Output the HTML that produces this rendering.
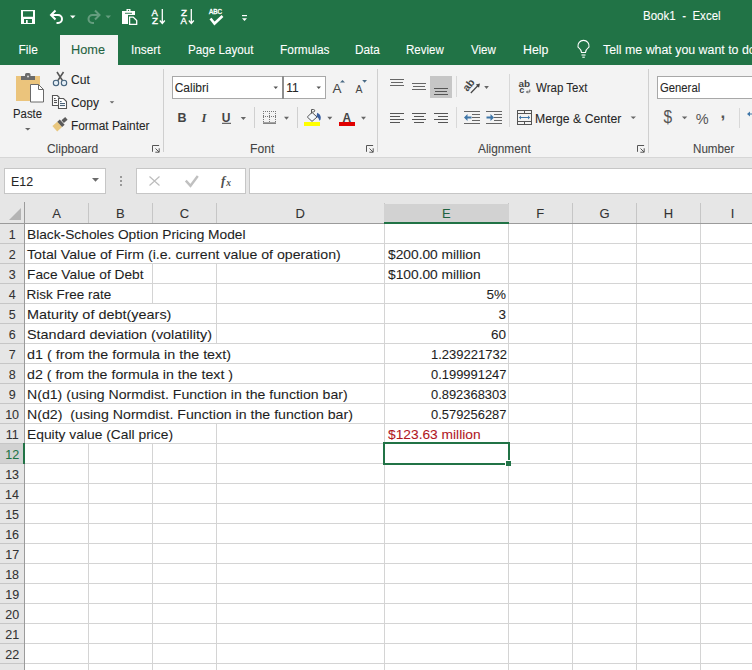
<!DOCTYPE html>
<html><head><meta charset="utf-8"><style>
html,body{margin:0;padding:0;width:752px;height:670px;overflow:hidden;background:#fff}
body{position:relative;font-family:"Liberation Sans",sans-serif}
body>div{position:absolute}
.t{white-space:pre;line-height:normal;-webkit-text-stroke:0.08px currentColor}
</style></head><body>
<div style="left:0px;top:0px;width:752px;height:65px;background:#217346"></div>
<div style="left:60px;top:35px;width:58px;height:30px;background:#f3f3f3"></div>
<div style="left:0px;top:65px;width:752px;height:92px;background:#f3f3f3"></div>
<div style="left:0px;top:157px;width:752px;height:1px;background:#d6d6d6"></div>
<div style="left:0px;top:158px;width:752px;height:66px;background:#e6e6e6"></div>
<div style="left:4px;top:168px;width:102px;height:26px;background:#fff;box-sizing:border-box;border:1px solid #c6c6c6"></div>
<div style="left:136px;top:168px;width:110px;height:26px;background:#fff;box-sizing:border-box;border:1px solid #c6c6c6"></div>
<div style="left:249px;top:168px;width:510px;height:26px;background:#fff;box-sizing:border-box;border:1px solid #c6c6c6"></div>
<div style="left:0px;top:224px;width:24px;height:446px;background:#e6e6e6"></div>
<div style="left:25px;top:224px;width:727px;height:446px;background:#fff"></div>
<div style="left:88px;top:203px;width:1px;height:20px;background:#c6c6c6"></div>
<div style="left:152px;top:203px;width:1px;height:20px;background:#c6c6c6"></div>
<div style="left:216px;top:203px;width:1px;height:20px;background:#c6c6c6"></div>
<div style="left:384px;top:203px;width:1px;height:20px;background:#c6c6c6"></div>
<div style="left:508px;top:203px;width:1px;height:20px;background:#c6c6c6"></div>
<div style="left:572px;top:203px;width:1px;height:20px;background:#c6c6c6"></div>
<div style="left:636px;top:203px;width:1px;height:20px;background:#c6c6c6"></div>
<div style="left:700px;top:203px;width:1px;height:20px;background:#c6c6c6"></div>
<div style="left:24px;top:202px;width:1px;height:468px;background:#9b9b9b"></div>
<div style="left:0px;top:223px;width:752px;height:1px;background:#9b9b9b"></div>
<div style="left:384px;top:204px;width:125px;height:18px;background:#d2d2d2"></div>
<div style="left:384px;top:222px;width:125px;height:2px;background:#217346"></div>
<div style="left:0px;top:243px;width:24px;height:1px;background:#c6c6c6"></div>
<div style="left:25px;top:243px;width:727px;height:1px;background:#d4d4d4"></div>
<div style="left:0px;top:263px;width:24px;height:1px;background:#c6c6c6"></div>
<div style="left:25px;top:263px;width:727px;height:1px;background:#d4d4d4"></div>
<div style="left:0px;top:283px;width:24px;height:1px;background:#c6c6c6"></div>
<div style="left:25px;top:283px;width:727px;height:1px;background:#d4d4d4"></div>
<div style="left:0px;top:303px;width:24px;height:1px;background:#c6c6c6"></div>
<div style="left:25px;top:303px;width:727px;height:1px;background:#d4d4d4"></div>
<div style="left:0px;top:323px;width:24px;height:1px;background:#c6c6c6"></div>
<div style="left:25px;top:323px;width:727px;height:1px;background:#d4d4d4"></div>
<div style="left:0px;top:343px;width:24px;height:1px;background:#c6c6c6"></div>
<div style="left:25px;top:343px;width:727px;height:1px;background:#d4d4d4"></div>
<div style="left:0px;top:363px;width:24px;height:1px;background:#c6c6c6"></div>
<div style="left:25px;top:363px;width:727px;height:1px;background:#d4d4d4"></div>
<div style="left:0px;top:383px;width:24px;height:1px;background:#c6c6c6"></div>
<div style="left:25px;top:383px;width:727px;height:1px;background:#d4d4d4"></div>
<div style="left:0px;top:403px;width:24px;height:1px;background:#c6c6c6"></div>
<div style="left:25px;top:403px;width:727px;height:1px;background:#d4d4d4"></div>
<div style="left:0px;top:423px;width:24px;height:1px;background:#c6c6c6"></div>
<div style="left:25px;top:423px;width:727px;height:1px;background:#d4d4d4"></div>
<div style="left:0px;top:443px;width:24px;height:1px;background:#c6c6c6"></div>
<div style="left:25px;top:443px;width:727px;height:1px;background:#d4d4d4"></div>
<div style="left:0px;top:463px;width:24px;height:1px;background:#c6c6c6"></div>
<div style="left:25px;top:463px;width:727px;height:1px;background:#d4d4d4"></div>
<div style="left:0px;top:483px;width:24px;height:1px;background:#c6c6c6"></div>
<div style="left:25px;top:483px;width:727px;height:1px;background:#d4d4d4"></div>
<div style="left:0px;top:503px;width:24px;height:1px;background:#c6c6c6"></div>
<div style="left:25px;top:503px;width:727px;height:1px;background:#d4d4d4"></div>
<div style="left:0px;top:523px;width:24px;height:1px;background:#c6c6c6"></div>
<div style="left:25px;top:523px;width:727px;height:1px;background:#d4d4d4"></div>
<div style="left:0px;top:543px;width:24px;height:1px;background:#c6c6c6"></div>
<div style="left:25px;top:543px;width:727px;height:1px;background:#d4d4d4"></div>
<div style="left:0px;top:563px;width:24px;height:1px;background:#c6c6c6"></div>
<div style="left:25px;top:563px;width:727px;height:1px;background:#d4d4d4"></div>
<div style="left:0px;top:583px;width:24px;height:1px;background:#c6c6c6"></div>
<div style="left:25px;top:583px;width:727px;height:1px;background:#d4d4d4"></div>
<div style="left:0px;top:603px;width:24px;height:1px;background:#c6c6c6"></div>
<div style="left:25px;top:603px;width:727px;height:1px;background:#d4d4d4"></div>
<div style="left:0px;top:623px;width:24px;height:1px;background:#c6c6c6"></div>
<div style="left:25px;top:623px;width:727px;height:1px;background:#d4d4d4"></div>
<div style="left:0px;top:643px;width:24px;height:1px;background:#c6c6c6"></div>
<div style="left:25px;top:643px;width:727px;height:1px;background:#d4d4d4"></div>
<div style="left:0px;top:663px;width:24px;height:1px;background:#c6c6c6"></div>
<div style="left:25px;top:663px;width:727px;height:1px;background:#d4d4d4"></div>
<div style="left:88px;top:444px;width:1px;height:19px;background:#d4d4d4"></div>
<div style="left:88px;top:464px;width:1px;height:19px;background:#d4d4d4"></div>
<div style="left:88px;top:484px;width:1px;height:19px;background:#d4d4d4"></div>
<div style="left:88px;top:504px;width:1px;height:19px;background:#d4d4d4"></div>
<div style="left:88px;top:524px;width:1px;height:19px;background:#d4d4d4"></div>
<div style="left:88px;top:544px;width:1px;height:19px;background:#d4d4d4"></div>
<div style="left:88px;top:564px;width:1px;height:19px;background:#d4d4d4"></div>
<div style="left:88px;top:584px;width:1px;height:19px;background:#d4d4d4"></div>
<div style="left:88px;top:604px;width:1px;height:19px;background:#d4d4d4"></div>
<div style="left:88px;top:624px;width:1px;height:19px;background:#d4d4d4"></div>
<div style="left:88px;top:644px;width:1px;height:19px;background:#d4d4d4"></div>
<div style="left:88px;top:664px;width:1px;height:6px;background:#d4d4d4"></div>
<div style="left:152px;top:264px;width:1px;height:19px;background:#d4d4d4"></div>
<div style="left:152px;top:284px;width:1px;height:19px;background:#d4d4d4"></div>
<div style="left:152px;top:444px;width:1px;height:19px;background:#d4d4d4"></div>
<div style="left:152px;top:464px;width:1px;height:19px;background:#d4d4d4"></div>
<div style="left:152px;top:484px;width:1px;height:19px;background:#d4d4d4"></div>
<div style="left:152px;top:504px;width:1px;height:19px;background:#d4d4d4"></div>
<div style="left:152px;top:524px;width:1px;height:19px;background:#d4d4d4"></div>
<div style="left:152px;top:544px;width:1px;height:19px;background:#d4d4d4"></div>
<div style="left:152px;top:564px;width:1px;height:19px;background:#d4d4d4"></div>
<div style="left:152px;top:584px;width:1px;height:19px;background:#d4d4d4"></div>
<div style="left:152px;top:604px;width:1px;height:19px;background:#d4d4d4"></div>
<div style="left:152px;top:624px;width:1px;height:19px;background:#d4d4d4"></div>
<div style="left:152px;top:644px;width:1px;height:19px;background:#d4d4d4"></div>
<div style="left:152px;top:664px;width:1px;height:6px;background:#d4d4d4"></div>
<div style="left:216px;top:264px;width:1px;height:19px;background:#d4d4d4"></div>
<div style="left:216px;top:284px;width:1px;height:19px;background:#d4d4d4"></div>
<div style="left:216px;top:304px;width:1px;height:19px;background:#d4d4d4"></div>
<div style="left:216px;top:324px;width:1px;height:19px;background:#d4d4d4"></div>
<div style="left:216px;top:424px;width:1px;height:19px;background:#d4d4d4"></div>
<div style="left:216px;top:444px;width:1px;height:19px;background:#d4d4d4"></div>
<div style="left:216px;top:464px;width:1px;height:19px;background:#d4d4d4"></div>
<div style="left:216px;top:484px;width:1px;height:19px;background:#d4d4d4"></div>
<div style="left:216px;top:504px;width:1px;height:19px;background:#d4d4d4"></div>
<div style="left:216px;top:524px;width:1px;height:19px;background:#d4d4d4"></div>
<div style="left:216px;top:544px;width:1px;height:19px;background:#d4d4d4"></div>
<div style="left:216px;top:564px;width:1px;height:19px;background:#d4d4d4"></div>
<div style="left:216px;top:584px;width:1px;height:19px;background:#d4d4d4"></div>
<div style="left:216px;top:604px;width:1px;height:19px;background:#d4d4d4"></div>
<div style="left:216px;top:624px;width:1px;height:19px;background:#d4d4d4"></div>
<div style="left:216px;top:644px;width:1px;height:19px;background:#d4d4d4"></div>
<div style="left:216px;top:664px;width:1px;height:6px;background:#d4d4d4"></div>
<div style="left:384px;top:224px;width:1px;height:19px;background:#d4d4d4"></div>
<div style="left:384px;top:244px;width:1px;height:19px;background:#d4d4d4"></div>
<div style="left:384px;top:264px;width:1px;height:19px;background:#d4d4d4"></div>
<div style="left:384px;top:284px;width:1px;height:19px;background:#d4d4d4"></div>
<div style="left:384px;top:304px;width:1px;height:19px;background:#d4d4d4"></div>
<div style="left:384px;top:324px;width:1px;height:19px;background:#d4d4d4"></div>
<div style="left:384px;top:344px;width:1px;height:19px;background:#d4d4d4"></div>
<div style="left:384px;top:364px;width:1px;height:19px;background:#d4d4d4"></div>
<div style="left:384px;top:384px;width:1px;height:19px;background:#d4d4d4"></div>
<div style="left:384px;top:404px;width:1px;height:19px;background:#d4d4d4"></div>
<div style="left:384px;top:424px;width:1px;height:19px;background:#d4d4d4"></div>
<div style="left:384px;top:444px;width:1px;height:19px;background:#d4d4d4"></div>
<div style="left:384px;top:464px;width:1px;height:19px;background:#d4d4d4"></div>
<div style="left:384px;top:484px;width:1px;height:19px;background:#d4d4d4"></div>
<div style="left:384px;top:504px;width:1px;height:19px;background:#d4d4d4"></div>
<div style="left:384px;top:524px;width:1px;height:19px;background:#d4d4d4"></div>
<div style="left:384px;top:544px;width:1px;height:19px;background:#d4d4d4"></div>
<div style="left:384px;top:564px;width:1px;height:19px;background:#d4d4d4"></div>
<div style="left:384px;top:584px;width:1px;height:19px;background:#d4d4d4"></div>
<div style="left:384px;top:604px;width:1px;height:19px;background:#d4d4d4"></div>
<div style="left:384px;top:624px;width:1px;height:19px;background:#d4d4d4"></div>
<div style="left:384px;top:644px;width:1px;height:19px;background:#d4d4d4"></div>
<div style="left:384px;top:664px;width:1px;height:6px;background:#d4d4d4"></div>
<div style="left:508px;top:224px;width:1px;height:19px;background:#d4d4d4"></div>
<div style="left:508px;top:244px;width:1px;height:19px;background:#d4d4d4"></div>
<div style="left:508px;top:264px;width:1px;height:19px;background:#d4d4d4"></div>
<div style="left:508px;top:284px;width:1px;height:19px;background:#d4d4d4"></div>
<div style="left:508px;top:304px;width:1px;height:19px;background:#d4d4d4"></div>
<div style="left:508px;top:324px;width:1px;height:19px;background:#d4d4d4"></div>
<div style="left:508px;top:344px;width:1px;height:19px;background:#d4d4d4"></div>
<div style="left:508px;top:364px;width:1px;height:19px;background:#d4d4d4"></div>
<div style="left:508px;top:384px;width:1px;height:19px;background:#d4d4d4"></div>
<div style="left:508px;top:404px;width:1px;height:19px;background:#d4d4d4"></div>
<div style="left:508px;top:424px;width:1px;height:19px;background:#d4d4d4"></div>
<div style="left:508px;top:444px;width:1px;height:19px;background:#d4d4d4"></div>
<div style="left:508px;top:464px;width:1px;height:19px;background:#d4d4d4"></div>
<div style="left:508px;top:484px;width:1px;height:19px;background:#d4d4d4"></div>
<div style="left:508px;top:504px;width:1px;height:19px;background:#d4d4d4"></div>
<div style="left:508px;top:524px;width:1px;height:19px;background:#d4d4d4"></div>
<div style="left:508px;top:544px;width:1px;height:19px;background:#d4d4d4"></div>
<div style="left:508px;top:564px;width:1px;height:19px;background:#d4d4d4"></div>
<div style="left:508px;top:584px;width:1px;height:19px;background:#d4d4d4"></div>
<div style="left:508px;top:604px;width:1px;height:19px;background:#d4d4d4"></div>
<div style="left:508px;top:624px;width:1px;height:19px;background:#d4d4d4"></div>
<div style="left:508px;top:644px;width:1px;height:19px;background:#d4d4d4"></div>
<div style="left:508px;top:664px;width:1px;height:6px;background:#d4d4d4"></div>
<div style="left:572px;top:224px;width:1px;height:19px;background:#d4d4d4"></div>
<div style="left:572px;top:244px;width:1px;height:19px;background:#d4d4d4"></div>
<div style="left:572px;top:264px;width:1px;height:19px;background:#d4d4d4"></div>
<div style="left:572px;top:284px;width:1px;height:19px;background:#d4d4d4"></div>
<div style="left:572px;top:304px;width:1px;height:19px;background:#d4d4d4"></div>
<div style="left:572px;top:324px;width:1px;height:19px;background:#d4d4d4"></div>
<div style="left:572px;top:344px;width:1px;height:19px;background:#d4d4d4"></div>
<div style="left:572px;top:364px;width:1px;height:19px;background:#d4d4d4"></div>
<div style="left:572px;top:384px;width:1px;height:19px;background:#d4d4d4"></div>
<div style="left:572px;top:404px;width:1px;height:19px;background:#d4d4d4"></div>
<div style="left:572px;top:424px;width:1px;height:19px;background:#d4d4d4"></div>
<div style="left:572px;top:444px;width:1px;height:19px;background:#d4d4d4"></div>
<div style="left:572px;top:464px;width:1px;height:19px;background:#d4d4d4"></div>
<div style="left:572px;top:484px;width:1px;height:19px;background:#d4d4d4"></div>
<div style="left:572px;top:504px;width:1px;height:19px;background:#d4d4d4"></div>
<div style="left:572px;top:524px;width:1px;height:19px;background:#d4d4d4"></div>
<div style="left:572px;top:544px;width:1px;height:19px;background:#d4d4d4"></div>
<div style="left:572px;top:564px;width:1px;height:19px;background:#d4d4d4"></div>
<div style="left:572px;top:584px;width:1px;height:19px;background:#d4d4d4"></div>
<div style="left:572px;top:604px;width:1px;height:19px;background:#d4d4d4"></div>
<div style="left:572px;top:624px;width:1px;height:19px;background:#d4d4d4"></div>
<div style="left:572px;top:644px;width:1px;height:19px;background:#d4d4d4"></div>
<div style="left:572px;top:664px;width:1px;height:6px;background:#d4d4d4"></div>
<div style="left:636px;top:224px;width:1px;height:19px;background:#d4d4d4"></div>
<div style="left:636px;top:244px;width:1px;height:19px;background:#d4d4d4"></div>
<div style="left:636px;top:264px;width:1px;height:19px;background:#d4d4d4"></div>
<div style="left:636px;top:284px;width:1px;height:19px;background:#d4d4d4"></div>
<div style="left:636px;top:304px;width:1px;height:19px;background:#d4d4d4"></div>
<div style="left:636px;top:324px;width:1px;height:19px;background:#d4d4d4"></div>
<div style="left:636px;top:344px;width:1px;height:19px;background:#d4d4d4"></div>
<div style="left:636px;top:364px;width:1px;height:19px;background:#d4d4d4"></div>
<div style="left:636px;top:384px;width:1px;height:19px;background:#d4d4d4"></div>
<div style="left:636px;top:404px;width:1px;height:19px;background:#d4d4d4"></div>
<div style="left:636px;top:424px;width:1px;height:19px;background:#d4d4d4"></div>
<div style="left:636px;top:444px;width:1px;height:19px;background:#d4d4d4"></div>
<div style="left:636px;top:464px;width:1px;height:19px;background:#d4d4d4"></div>
<div style="left:636px;top:484px;width:1px;height:19px;background:#d4d4d4"></div>
<div style="left:636px;top:504px;width:1px;height:19px;background:#d4d4d4"></div>
<div style="left:636px;top:524px;width:1px;height:19px;background:#d4d4d4"></div>
<div style="left:636px;top:544px;width:1px;height:19px;background:#d4d4d4"></div>
<div style="left:636px;top:564px;width:1px;height:19px;background:#d4d4d4"></div>
<div style="left:636px;top:584px;width:1px;height:19px;background:#d4d4d4"></div>
<div style="left:636px;top:604px;width:1px;height:19px;background:#d4d4d4"></div>
<div style="left:636px;top:624px;width:1px;height:19px;background:#d4d4d4"></div>
<div style="left:636px;top:644px;width:1px;height:19px;background:#d4d4d4"></div>
<div style="left:636px;top:664px;width:1px;height:6px;background:#d4d4d4"></div>
<div style="left:700px;top:224px;width:1px;height:19px;background:#d4d4d4"></div>
<div style="left:700px;top:244px;width:1px;height:19px;background:#d4d4d4"></div>
<div style="left:700px;top:264px;width:1px;height:19px;background:#d4d4d4"></div>
<div style="left:700px;top:284px;width:1px;height:19px;background:#d4d4d4"></div>
<div style="left:700px;top:304px;width:1px;height:19px;background:#d4d4d4"></div>
<div style="left:700px;top:324px;width:1px;height:19px;background:#d4d4d4"></div>
<div style="left:700px;top:344px;width:1px;height:19px;background:#d4d4d4"></div>
<div style="left:700px;top:364px;width:1px;height:19px;background:#d4d4d4"></div>
<div style="left:700px;top:384px;width:1px;height:19px;background:#d4d4d4"></div>
<div style="left:700px;top:404px;width:1px;height:19px;background:#d4d4d4"></div>
<div style="left:700px;top:424px;width:1px;height:19px;background:#d4d4d4"></div>
<div style="left:700px;top:444px;width:1px;height:19px;background:#d4d4d4"></div>
<div style="left:700px;top:464px;width:1px;height:19px;background:#d4d4d4"></div>
<div style="left:700px;top:484px;width:1px;height:19px;background:#d4d4d4"></div>
<div style="left:700px;top:504px;width:1px;height:19px;background:#d4d4d4"></div>
<div style="left:700px;top:524px;width:1px;height:19px;background:#d4d4d4"></div>
<div style="left:700px;top:544px;width:1px;height:19px;background:#d4d4d4"></div>
<div style="left:700px;top:564px;width:1px;height:19px;background:#d4d4d4"></div>
<div style="left:700px;top:584px;width:1px;height:19px;background:#d4d4d4"></div>
<div style="left:700px;top:604px;width:1px;height:19px;background:#d4d4d4"></div>
<div style="left:700px;top:624px;width:1px;height:19px;background:#d4d4d4"></div>
<div style="left:700px;top:644px;width:1px;height:19px;background:#d4d4d4"></div>
<div style="left:700px;top:664px;width:1px;height:6px;background:#d4d4d4"></div>
<div style="left:0px;top:444px;width:23px;height:19px;background:#d2d2d2"></div>
<div style="left:23px;top:443px;width:2px;height:21px;background:#217346"></div>
<div style="left:383px;top:442px;width:127px;height:23px;background:transparent;box-sizing:border-box;border:2px solid #217346"></div>
<div style="left:505px;top:460px;width:6px;height:6px;background:#fff"></div>
<div style="left:506px;top:461px;width:5px;height:5px;background:#217346"></div>
<svg style="position:absolute;left:0;top:0" width="752" height="670"><polygon points="9,220 21,208 21,220" fill="#b4b4b4"/></svg>
<svg style="position:absolute;left:0;top:0" width="752" height="670">
<!-- QAT: save -->
<g fill="#fff">
  <path d="M21,10h14v14h-14z M23,11.2v5.6h10v-5.6z M24,19v4h8v-4z" fill-rule="evenodd"/>
  <rect x="26" y="20" width="1.7" height="3"/>
</g>
<!-- undo -->
<g fill="none" stroke="#fff" stroke-width="2" stroke-linejoin="miter">
  <path d="M51.5,15 H58 A4,4 0 0 1 58,23 H56.5"/>
  <path d="M55.5,10.5 L51,15 L55.5,19.5"/>
</g>
<path d="M70,15.5 h5.5 l-2.75,3 z" fill="#fff"/>
<!-- redo (faded) -->
<g opacity="0.3">
<g fill="none" stroke="#fff" stroke-width="2">
  <path d="M99,15 H92.5 A4,4 0 0 0 92.5,23 H94"/>
  <path d="M95,10.5 L99.5,15 L95,19.5"/>
</g>
<path d="M105.5,15.5 h5.5 l-2.75,3 z" fill="#fff"/>
</g>
<!-- clipboard QAT -->
<path d="M122,11H135V15H128V24H122Z" fill="#fff"/>
<rect x="125" y="12.8" width="7" height="0.9" fill="#217346"/>
<rect x="126.5" y="9" width="4" height="2.5" fill="#fff"/>
<circle cx="128.5" cy="10.4" r="0.7" fill="#217346"/>
<path d="M129.6,17.1H133.2L136.7,20.6V24.4H129.6Z" fill="#217346" stroke="#fff" stroke-width="1.3"/>
<!-- sort AZ / ZA -->
<g fill="#fff" stroke="#fff" stroke-width="0.35" font-family="Liberation Sans" font-size="9.6">
  <text x="151.6" y="15.7" textLength="6.4" lengthAdjust="spacingAndGlyphs">A</text><text x="152" y="24" textLength="6" lengthAdjust="spacingAndGlyphs">Z</text>
  <text x="181" y="15.7" textLength="6" lengthAdjust="spacingAndGlyphs">Z</text><text x="180.6" y="24" textLength="6.4" lengthAdjust="spacingAndGlyphs">A</text>
  <text x="209" y="14" font-size="6.4" textLength="13" lengthAdjust="spacingAndGlyphs">ABC</text>
</g>
<g fill="none" stroke="#fff" stroke-width="1.3">
  <path d="M162.3,9v14.5 M159.8,20.5l2.5,3l2.5,-3"/>
  <path d="M191.3,9v14.5 M188.8,20.5l2.5,3l2.5,-3"/>
</g>
<path d="M210.5,18.5 L214.5,23.5 L222.5,16" fill="none" stroke="#fff" stroke-width="2.6"/>
<rect x="242" y="15" width="5" height="1.2" fill="#fff"/>
<path d="M242,18.3h5l-2.5,2.7z" fill="#fff"/>
<!-- lightbulb -->
<g fill="none" stroke="#fff" stroke-width="1.1">
  <path d="M581.5,52.5 C581.5,49 578,47.5 578,47 A5.6,5.6 0 1 1 589,47 C589,47.5 585.5,49 585.5,52.5 z"/>
  <path d="M581.5,55h4"/><path d="M582.3,57.2h2.5"/>
</g>

<!-- Paste icon -->
<rect x="16" y="76" width="24" height="25" fill="#ebc47c"/>
<rect x="21" y="76" width="14" height="4" fill="#6a6a6a"/>
<path d="M25,77 v-2.5 a1.5,1.5 0 0 1 1.5,-1.5 h2.5 a1.5,1.5 0 0 1 1.5,1.5 v2.5z" fill="#6a6a6a"/>
<circle cx="28" cy="76.5" r="1" fill="#ddd"/>
<path d="M30.5,84.5h8l5,5v12.5h-13z" fill="#fff" stroke="#6a6a6a" stroke-width="1"/>
<path d="M38.5,84.5v5h5" fill="none" stroke="#6a6a6a" stroke-width="1"/>
<path d="M25,128h5.5l-2.75,2.5z" fill="#666"/>
<!-- scissors -->
<g fill="none" stroke="#555" stroke-width="1.6">
  <path d="M57,72 L62.5,80.6 M63.5,72 L57.8,80.6"/>
</g>
<g fill="#e4eef6" stroke="#44627c" stroke-width="1.1">
  <circle cx="56" cy="83" r="2.7"/><circle cx="64" cy="83" r="2.7"/>
</g>
<!-- copy -->
<path d="M52.5,95.5h4.8l1.8,1.8v8.2h-6.6z" fill="#fff" stroke="#555" stroke-width="1.1"/>
<path d="M58.5,98.5h5l3,3v7h-8z" fill="#fff" stroke="#555" stroke-width="1.1"/>
<g fill="#555"><rect x="54" y="98" width="1.6" height="1.1"/><rect x="54" y="100" width="3" height="1.1"/><rect x="54" y="102" width="3" height="1.1"/></g>
<g fill="#4a6278"><rect x="60" y="101" width="1.6" height="1.1"/><rect x="60" y="103" width="5" height="1.1"/><rect x="60" y="105" width="5" height="1.1"/></g>
<!-- format painter -->
<g transform="translate(54.8,128.8) rotate(-42)">
  <rect x="0" y="-3.6" width="6.6" height="7.2" fill="#e9c77e"/>
  <rect x="6.6" y="-3.6" width="3.4" height="7.2" fill="#5a5a5a"/>
  <rect x="10.6" y="-1.8" width="5" height="3.6" fill="#5a5a5a"/>
</g>
<path d="M109.7,101.2h4.6l-2.3,2.4z" fill="#666"/>
<!-- dialog launchers -->
<g fill="none" stroke="#555" stroke-width="1">
  <path d="M152.5,151.8 v-6.3 h6.6 M155.5,148.5 l3.6,3.6 M155.3,152.2h3.9v-3.9"/>
  <path d="M366.5,151.8 v-6.3 h6.6 M369.5,148.5 l3.6,3.6 M369.3,152.2h3.9v-3.9"/>
  <path d="M637.5,151.8 v-6.3 h6.6 M640.5,148.5 l3.6,3.6 M640.3,152.2h3.9v-3.9"/>
</g>
<!-- group separators -->
<g fill="#cfcfcf">
  <rect x="163" y="69" width="1" height="83"/>
  <rect x="377" y="69" width="1" height="83"/>
  <rect x="648" y="69" width="1" height="84"/>
</g>
<!-- font name/size boxes -->
<rect x="172.5" y="76.5" width="153" height="22" fill="#fff" stroke="#a8a8a8"/>
<rect x="282" y="76" width="2" height="23" fill="#8e8e8e"/>
<path d="M273.5,86.5h4.5l-2.25,2.5z M316.5,86.5h4.5l-2.25,2.5z" fill="#555"/>
<!-- grow / shrink font -->
<g fill="#444" font-family="Liberation Sans" font-size="13.5"><text x="332.4" y="92.6" textLength="9" lengthAdjust="spacingAndGlyphs">A</text><text x="355.4" y="92.6" font-size="10.5" textLength="7" lengthAdjust="spacingAndGlyphs">A</text></g>
<path d="M340,82.6 l2.5,-2.6 l2.5,2.6z" fill="#4a6a84"/>
<path d="M362.2,80 h4.8 l-2.4,2.8z" fill="#4a6a84"/>
<!-- B I U -->
<g fill="#444" font-family="Liberation Sans">
  <text x="177.6" y="121.8" font-weight="bold" font-size="12.5">B</text>
  <text x="201.5" y="121.8" font-style="italic" font-size="12.5" font-family="Liberation Serif" font-weight="bold">I</text>
  <text x="221.8" y="121.8" font-weight="bold" font-size="12">U</text>
</g>
<rect x="222" y="122.8" width="9" height="1" fill="#444"/>
<g fill="#666">
  <path d="M240.7,117h5.3l-2.65,3z M284,116.8h5l-2.5,3z M327.3,116.8h5l-2.5,3z M361,116.8h5l-2.5,3z"/>
</g>
<g fill="#d0d0d0"><rect x="254" y="107" width="1" height="21"/><rect x="297" y="107" width="1" height="21"/></g>
<!-- borders icon -->
<g fill="#666">
  <path d="M263,111h1v1h-1z"/>
</g>
<g stroke="#777" stroke-width="1" stroke-dasharray="1 1" fill="none">
  <path d="M263.5,111v11 M269.5,111v11 M275.5,111v11 M263,111.5h13 M263,116.5h13"/>
</g>
<rect x="263" y="122.5" width="13" height="1.2" fill="#555"/>
<!-- fill bucket -->
<path d="M307.3,117 L312,112.4 L317,117 L312,121.4z" fill="#f4f8fc" stroke="#555" stroke-width="1"/>
<path d="M311.5,113.5 v-4 h2 a1.2,1.2 0 0 1 0,2.4 h-1" fill="none" stroke="#555" stroke-width="1"/>
<path d="M317.2,112.8 q3.6,1.6 3.6,5 q0,2.3 -1.3,3 q-0.6,-2.6 -3,-4.2z" fill="#3a5fa0"/>
<rect x="304" y="122" width="16" height="4" fill="#ffff00"/>
<!-- font color -->
<text x="342.6" y="121.8" fill="#444" font-family="Liberation Sans" font-weight="bold" font-size="12.5" textLength="8.6" lengthAdjust="spacingAndGlyphs">A</text>
<rect x="339" y="122" width="16" height="4" fill="#e00000"/>
<!-- alignment lines -->
<g fill="#666">
  <rect x="390" y="79" width="14" height="1"/><rect x="391" y="82" width="12" height="1"/><rect x="390" y="85" width="14" height="1"/>
  <rect x="412" y="83" width="14" height="1"/><rect x="413" y="86" width="12" height="1"/><rect x="412" y="89" width="14" height="1"/>
</g>
<rect x="430" y="76" width="22" height="22" fill="#c6c6c6"/>
<g fill="#555">
  <rect x="434" y="88" width="14" height="1"/><rect x="435" y="91" width="12" height="1"/><rect x="434" y="94" width="14" height="1"/>
  <rect x="390" y="113" width="14" height="1"/><rect x="390" y="116" width="10" height="1"/><rect x="390" y="119" width="14" height="1"/><rect x="390" y="122" width="10" height="1"/>
  <rect x="412" y="113" width="14" height="1"/><rect x="414" y="116" width="10" height="1"/><rect x="412" y="119" width="14" height="1"/><rect x="414" y="122" width="10" height="1"/>
  <rect x="434" y="113" width="14" height="1"/><rect x="438" y="116" width="10" height="1"/><rect x="434" y="119" width="14" height="1"/><rect x="438" y="122" width="10" height="1"/>
</g>
<g fill="#d8d8d8"><rect x="456" y="76" width="1" height="21"/><rect x="456" y="107" width="1" height="21"/><rect x="509" y="74" width="1" height="53"/></g>
<!-- orientation -->
<text x="0" y="0" transform="translate(467.6,92) rotate(-52)" fill="#444" font-family="Liberation Sans" font-weight="bold" font-size="10.5">ab</text>
<path d="M470.8,93 L478.5,85" fill="none" stroke="#444" stroke-width="1.2"/>
<path d="M480,83.5 l-4.2,1 l3.2,3.2z" fill="#444"/>
<path d="M484.2,86.1h4.7l-2.35,2.9z" fill="#666"/>
<!-- indent icons -->
<g fill="#666">
  <rect x="464" y="111" width="16" height="1"/><rect x="472" y="114" width="8" height="1"/><rect x="472" y="117" width="8" height="1"/><rect x="472" y="120" width="8" height="1"/><rect x="464" y="123" width="16" height="1"/>
  <rect x="486" y="111" width="16" height="1"/><rect x="494" y="114" width="8" height="1"/><rect x="494" y="117" width="8" height="1"/><rect x="494" y="120" width="8" height="1"/><rect x="486" y="123" width="16" height="1"/>
</g>
<g fill="#3f76a8">
  <path d="M464,117.5 l3.5,-3.5 v2.5 h4 v2 h-4 v2.5z"/>
  <path d="M494,117.5 l-3.5,-3.5 v2.5 h-4 v2 h4 v2.5z"/>
</g>
<!-- wrap text icon -->
<g fill="#444" font-family="Liberation Sans" font-weight="bold" font-size="9">
  <text x="518.6" y="86.8" textLength="11.6" lengthAdjust="spacingAndGlyphs">ab</text><text x="519.2" y="93.4">c</text>
</g>
<path d="M529.8,89.5v2.5h-3.2 M527.8,90.7l-1.3,1.3l1.3,1.3" fill="none" stroke="#555" stroke-width="0.9"/>
<!-- merge icon -->
<g fill="none" stroke="#555" stroke-width="1">
  <rect x="517.5" y="110.5" width="14" height="14"/>
  <path d="M517.5,113.5h14 M517.5,121.5h14 M524.5,110.5v3 M524.5,121.5v3"/>
</g>
<path d="M519.5,117.5h10" stroke="#3f76a8" stroke-width="1"/>
<path d="M519,117.5l2,-2v4z M530,117.5l-2,-2v4z" fill="#3f76a8"/>
<path d="M630.6,116.4h5.4l-2.7,2.7z" fill="#666"/>
<!-- number format box -->
<rect x="657.5" y="76.5" width="110" height="22" fill="#fff" stroke="#a8a8a8"/>
<g fill="#555" font-family="Liberation Sans">
  <text x="663.4" y="123.3" font-size="17.5" textLength="8.6" lengthAdjust="spacingAndGlyphs">$</text>
  <text x="695.8" y="123.7" font-size="14.5">%</text>
  <text x="720.6" y="117.8" font-size="17" font-weight="bold">,</text>
</g>
<path d="M681.9,116.5h5.4l-2.7,2.8z" fill="#666"/>
<rect x="739" y="108" width="1" height="20" fill="#d8d8d8"/>
<path d="M747,114 l3,-2.5v5z" fill="#3f76a8"/><rect x="749" y="113.5" width="3" height="1" fill="#3f76a8"/>

<!-- formula bar -->
<path d="M92,178h7l-3.5,3.7z" fill="#6a6a6a"/>
<g fill="#999"><rect x="120" y="176" width="2" height="2"/><rect x="120" y="180" width="2" height="2"/><rect x="120" y="184" width="2" height="2"/></g>
<path d="M149.5,176.5 L159.5,185.5 M159.5,176.5 L149.5,185.5" stroke="#bdbdbd" stroke-width="1.2" fill="none"/>
<path d="M185.8,180.6 L190.5,185.8 L197.8,176" stroke="#c0c0c0" stroke-width="2.4" fill="none"/>
<g fill="#505050" font-family="Liberation Serif" font-style="italic" font-weight="bold">
  <text x="221" y="185" font-size="13">f</text><text x="226.3" y="186" font-size="9.5">x</text>
</g>
</svg>

<div class="t" style="left:642.58px;top:9px;font-size:12.50px;color:#fff;transform:scaleX(0.9236);transform-origin:0 0">Book1&nbsp;&nbsp;-&nbsp;&nbsp;Excel</div>
<div class="t" style="left:18.54px;top:43px;font-size:12.00px;color:#fff">File</div>
<div class="t" style="left:130.94px;top:43px;font-size:12.00px;color:#fff;transform:scaleX(0.9842);transform-origin:0 0">Insert</div>
<div class="t" style="left:187.57px;top:43px;font-size:12.00px;color:#fff;transform:scaleX(0.9706);transform-origin:0 0">Page Layout</div>
<div class="t" style="left:279.55px;top:43px;font-size:12.00px;color:#fff;transform:scaleX(0.9910);transform-origin:0 0">Formulas</div>
<div class="t" style="left:355.06px;top:43px;font-size:12.00px;color:#fff;transform:scaleX(0.9822);transform-origin:0 0">Data</div>
<div class="t" style="left:406.08px;top:43px;font-size:12.00px;color:#fff;transform:scaleX(0.9615);transform-origin:0 0">Review</div>
<div class="t" style="left:471.00px;top:43px;font-size:12.00px;color:#fff;transform:scaleX(0.9657);transform-origin:0 0">View</div>
<div class="t" style="left:522.51px;top:43px;font-size:12.00px;color:#fff;transform:scaleX(1.0307);transform-origin:0 0">Help</div>
<div class="t" style="left:71.48px;top:43px;font-size:12.00px;color:#1f6240;transform:scaleX(1.0615);transform-origin:0 0">Home</div>
<div class="t" style="left:603.25px;top:43px;font-size:12.00px;color:#fff;transform:scaleX(1.0312);transform-origin:0 0">Tell me what you want to do</div>
<div class="t" style="left:70.89px;top:73px;font-size:12.00px;color:#262626;transform:scaleX(1.0111);transform-origin:0 0">Cut</div>
<div class="t" style="left:70.90px;top:96px;font-size:12.00px;color:#262626">Copy</div>
<div class="t" style="left:70.55px;top:119px;font-size:12.00px;color:#262626;transform:scaleX(0.9892);transform-origin:0 0">Format Painter</div>
<div class="t" style="left:13.39px;top:107px;font-size:12.00px;color:#262626;transform:scaleX(0.9457);transform-origin:0 0">Paste</div>
<div class="t" style="left:46.90px;top:142px;font-size:12.00px;color:#444">Clipboard</div>
<div class="t" style="left:249.53px;top:142px;font-size:12.00px;color:#444;transform:scaleX(1.0096);transform-origin:0 0">Font</div>
<div class="t" style="left:478.10px;top:142px;font-size:12.00px;color:#444;transform:scaleX(0.9871);transform-origin:0 0">Alignment</div>
<div class="t" style="left:692.77px;top:142px;font-size:12.00px;color:#444;transform:scaleX(0.9696);transform-origin:0 0">Number</div>
<div class="t" style="left:536.00px;top:81px;font-size:12.00px;color:#262626;transform:scaleX(0.9587);transform-origin:0 0">Wrap Text</div>
<div class="t" style="left:535.02px;top:112px;font-size:12.00px;color:#262626;transform:scaleX(1.0193);transform-origin:0 0">Merge &amp; Center</div>
<div class="t" style="left:174.70px;top:81px;font-size:12.00px;color:#262626">Calibri</div>
<div class="t" style="left:286.16px;top:81px;font-size:12.00px;color:#262626">11</div>
<div class="t" style="left:660.14px;top:81px;font-size:12.00px;color:#262626;transform:scaleX(0.9409);transform-origin:0 0">General</div>
<div class="t" style="left:10.51px;top:175px;font-size:12.00px;color:#262626;transform:scaleX(1.0334);transform-origin:0 0">E12</div>
<div class="t" style="left:52.14px;top:206px;font-size:13.00px;color:#333">A</div>
<div class="t" style="left:115.95px;top:206px;font-size:13.00px;color:#333">B</div>
<div class="t" style="left:179.69px;top:206px;font-size:13.00px;color:#333">C</div>
<div class="t" style="left:295.56px;top:206px;font-size:13.00px;color:#333">D</div>
<div class="t" style="left:441.88px;top:206px;font-size:13.00px;color:#1f6240">E</div>
<div class="t" style="left:536.21px;top:206px;font-size:13.00px;color:#333">F</div>
<div class="t" style="left:599.56px;top:206px;font-size:13.00px;color:#333">G</div>
<div class="t" style="left:663.75px;top:206px;font-size:13.00px;color:#333">H</div>
<div class="t" style="left:730.68px;top:206px;font-size:13.00px;color:#333">I</div>
<div class="t" style="left:8.68px;top:228px;font-size:12.50px;color:#333">1</div>
<div class="t" style="left:8.80px;top:248px;font-size:12.50px;color:#333">2</div>
<div class="t" style="left:8.86px;top:268px;font-size:12.50px;color:#333">3</div>
<div class="t" style="left:8.86px;top:288px;font-size:12.50px;color:#333">4</div>
<div class="t" style="left:8.80px;top:308px;font-size:12.50px;color:#333">5</div>
<div class="t" style="left:8.74px;top:328px;font-size:12.50px;color:#333">6</div>
<div class="t" style="left:8.80px;top:348px;font-size:12.50px;color:#333">7</div>
<div class="t" style="left:8.80px;top:368px;font-size:12.50px;color:#333">8</div>
<div class="t" style="left:8.86px;top:388px;font-size:12.50px;color:#333">9</div>
<div class="t" style="left:5.14px;top:408px;font-size:12.50px;color:#333">10</div>
<div class="t" style="left:5.66px;top:428px;font-size:12.50px;color:#333">11</div>
<div class="t" style="left:5.20px;top:448px;font-size:12.50px;color:#217346">12</div>
<div class="t" style="left:5.14px;top:468px;font-size:12.50px;color:#333">13</div>
<div class="t" style="left:5.07px;top:488px;font-size:12.50px;color:#333">14</div>
<div class="t" style="left:5.14px;top:508px;font-size:12.50px;color:#333">15</div>
<div class="t" style="left:5.14px;top:528px;font-size:12.50px;color:#333">16</div>
<div class="t" style="left:5.20px;top:548px;font-size:12.50px;color:#333">17</div>
<div class="t" style="left:5.14px;top:568px;font-size:12.50px;color:#333">18</div>
<div class="t" style="left:5.20px;top:588px;font-size:12.50px;color:#333">19</div>
<div class="t" style="left:5.26px;top:608px;font-size:12.50px;color:#333">20</div>
<div class="t" style="left:5.32px;top:628px;font-size:12.50px;color:#333">21</div>
<div class="t" style="left:5.32px;top:648px;font-size:12.50px;color:#333">22</div>
<div class="t" style="left:5.26px;top:668px;font-size:12.50px;color:#333">23</div>
<div class="t" style="left:26.60px;top:227px;font-size:13.50px;color:#1e1e1e;transform:scaleX(1.0184);transform-origin:0 0">Black-Scholes Option Pricing Model</div>
<div class="t" style="left:27.42px;top:247px;font-size:13.50px;color:#1e1e1e;transform:scaleX(1.0488);transform-origin:0 0">Total Value of Firm (i.e. current value of operation)</div>
<div class="t" style="left:26.60px;top:267px;font-size:13.50px;color:#1e1e1e;transform:scaleX(1.0175);transform-origin:0 0">Face Value of Debt</div>
<div class="t" style="left:26.62px;top:287px;font-size:13.50px;color:#1e1e1e">Risk Free rate</div>
<div class="t" style="left:26.55px;top:307px;font-size:13.50px;color:#1e1e1e;transform:scaleX(1.0694);transform-origin:0 0">Maturity of debt(years)</div>
<div class="t" style="left:27.12px;top:327px;font-size:13.50px;color:#1e1e1e;transform:scaleX(1.0669);transform-origin:0 0">Standard deviation (volatility)</div>
<div class="t" style="left:27.13px;top:347px;font-size:13.50px;color:#1e1e1e;transform:scaleX(1.0622);transform-origin:0 0">d1 ( from the formula in the text)</div>
<div class="t" style="left:27.13px;top:367px;font-size:13.50px;color:#1e1e1e;transform:scaleX(1.0520);transform-origin:0 0">d2 ( from the formula in the text )</div>
<div class="t" style="left:26.57px;top:387px;font-size:13.50px;color:#1e1e1e;transform:scaleX(1.0450);transform-origin:0 0">N(d1) (using Normdist. Function in the function bar)</div>
<div class="t" style="left:26.57px;top:407px;font-size:13.50px;color:#1e1e1e;transform:scaleX(1.0491);transform-origin:0 0">N(d2)&nbsp;&nbsp;(using&nbsp;Normdist.&nbsp;Function&nbsp;in&nbsp;the&nbsp;function&nbsp;bar)</div>
<div class="t" style="left:26.59px;top:427px;font-size:13.50px;color:#1e1e1e;transform:scaleX(1.0244);transform-origin:0 0">Equity value (Call price)</div>
<div class="t" style="left:387.66px;top:247px;font-size:13.50px;color:#1e1e1e;transform:scaleX(1.0198);transform-origin:0 0">$200.00 million</div>
<div class="t" style="left:387.66px;top:267px;font-size:13.50px;color:#1e1e1e;transform:scaleX(1.0198);transform-origin:0 0">$100.00 million</div>
<div class="t" style="left:387.66px;top:427px;font-size:13.50px;color:#b0161e;transform:scaleX(1.0198);transform-origin:0 0">$123.63 million</div>
<div class="t" style="left:486.38px;top:287px;font-size:13.50px;color:#1e1e1e">5%</div>
<div class="t" style="left:498.48px;top:307px;font-size:13.50px;color:#1e1e1e">3</div>
<div class="t" style="left:490.97px;top:327px;font-size:13.50px;color:#1e1e1e">60</div>
<div class="t" style="left:430.79px;top:347px;font-size:13.50px;color:#1e1e1e;transform:scaleX(0.9642);transform-origin:0 0">1.239221732</div>
<div class="t" style="left:431.31px;top:367px;font-size:13.50px;color:#1e1e1e;transform:scaleX(0.9575);transform-origin:0 0">0.199991247</div>
<div class="t" style="left:431.31px;top:387px;font-size:13.50px;color:#1e1e1e;transform:scaleX(0.9559);transform-origin:0 0">0.892368303</div>
<div class="t" style="left:431.31px;top:407px;font-size:13.50px;color:#1e1e1e;transform:scaleX(0.9575);transform-origin:0 0">0.579256287</div>
</body></html>
